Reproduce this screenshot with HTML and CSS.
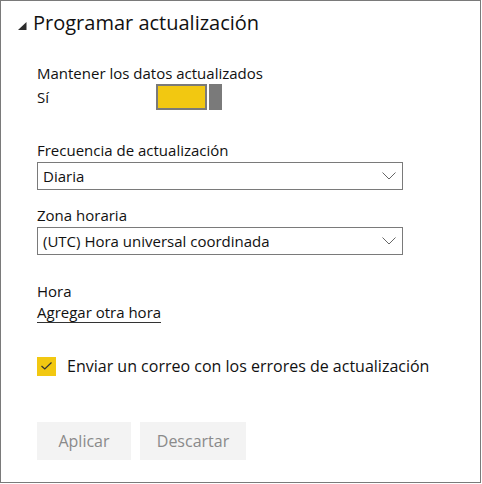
FILE: index.html
```html
<!DOCTYPE html>
<html lang="es">
<head>
<meta charset="utf-8">
<link rel="stylesheet" href="styles.css">
</head>
<body>
<div class="panel">
  <div class="title">
    <svg class="tri" width="9" height="8" viewBox="0 0 9 8"><polygon points="8.5,0 8.5,8 0,8" fill="#2b2b2b"/></svg>
    <span>Programar actualización</span>
  </div>
  <div class="content">
    <div class="field keep">
      <div class="label">Mantener los datos actualizados</div>
      <div class="toggle-row">
        <span class="si">Sí</span>
        <span class="toggle"><span class="track"></span><span class="thumb"></span></span>
      </div>
    </div>
    <div class="field freq">
      <div class="label">Frecuencia de actualización</div>
      <div class="select"><span>Diaria</span>
        <svg class="chev" width="14" height="8" viewBox="0 0 14 8"><polyline points="0.5,0.5 7,7 13.5,0.5" fill="none" stroke="#666" stroke-width="1"/></svg>
      </div>
    </div>
    <div class="field zone">
      <div class="label">Zona horaria</div>
      <div class="select"><span>(UTC) Hora universal coordinada</span>
        <svg class="chev" width="14" height="8" viewBox="0 0 14 8"><polyline points="0.5,0.5 7,7 13.5,0.5" fill="none" stroke="#666" stroke-width="1"/></svg>
      </div>
    </div>
    <div class="field hora">
      <div class="label">Hora</div>
      <a class="link">Agregar otra hora</a>
    </div>
    <label class="check-row">
      <span class="checkbox">
        <svg width="11" height="8" viewBox="0 0 11 8"><polyline points="0.5,4 3.8,7 10.5,0.5" fill="none" stroke="#333" stroke-width="1.2"/></svg>
      </span>
      <span>Enviar un correo con los errores de actualización</span>
    </label>
    <div class="buttons">
      <button class="btn apply">Aplicar</button>
      <button class="btn discard">Descartar</button>
    </div>
  </div>
</div>
</body>
</html>
```
FILE: styles.css
```css
html, body {
  margin: 0;
  padding: 0;
  background: #fff;
}
body {
  font-family: "Open Sans", "Noto Sans", sans-serif;
  color: #111;
}
.panel {
  box-sizing: border-box;
  width: 481px;
  height: 483px;
  border: 1px solid #7a7a7a;
}
.title {
  display: flex;
  align-items: center;
  padding: 6px 0 0 17px;
  height: 32px;
  font-size: 20px;
  line-height: 28px;
  color: #111;
}
.tri {
  margin-right: 6px;
  margin-top: 5px;
}
.content {
  padding: 0 0 0 36px;
}
.label {
  font-size: 15px;
  line-height: 20px;
}
.keep {
  margin-top: 24px;
}
.toggle-row {
  display: flex;
  align-items: center;
  height: 26px;
  margin-top: 1px;
}
.si {
  font-size: 15px;
  width: 119px;
}
.toggle {
  display: flex;
  gap: 2px;
}
.track {
  box-sizing: border-box;
  width: 51px;
  height: 26px;
  border: 2px solid #7a7a7a;
  background: #f2c811;
}
.thumb {
  width: 13px;
  height: 26px;
  background: #7a7a7a;
}
.freq {
  margin-top: 30px;
}
.zone {
  margin-top: 15px;
}
.select {
  box-sizing: border-box;
  width: 366px;
  height: 28px;
  border: 1px solid #7a7a7a;
  display: flex;
  align-items: center;
  justify-content: space-between;
  padding: 0 4px 0 5px;
  font-size: 15px;
  margin-top: 2px;
}
.chev {
  margin-right: 2px;
  margin-top: -1px;
}
.hora {
  margin-top: 26px;
}
.link {
  display: inline-block;
  font-size: 15px;
  line-height: 20px;
  color: #111;
  border-bottom: 1px solid #333;
}
.check-row {
  display: flex;
  align-items: center;
  margin-top: 32px;
  font-size: 16px;
}
.checkbox {
  box-sizing: border-box;
  width: 19px;
  height: 19px;
  background: #f2c811;
  display: flex;
  align-items: center;
  justify-content: center;
  margin-right: 11px;
}
.buttons {
  display: flex;
  gap: 9px;
  margin-top: 45px;
}
.btn {
  border: none;
  background: #f3f3f3;
  color: #8a8a8a;
  font-family: "Open Sans", "Noto Sans", sans-serif;
  font-size: 16px;
  height: 38px;
  padding: 0;
}
.apply {
  width: 94px;
}
.discard {
  width: 106px;
}
```
